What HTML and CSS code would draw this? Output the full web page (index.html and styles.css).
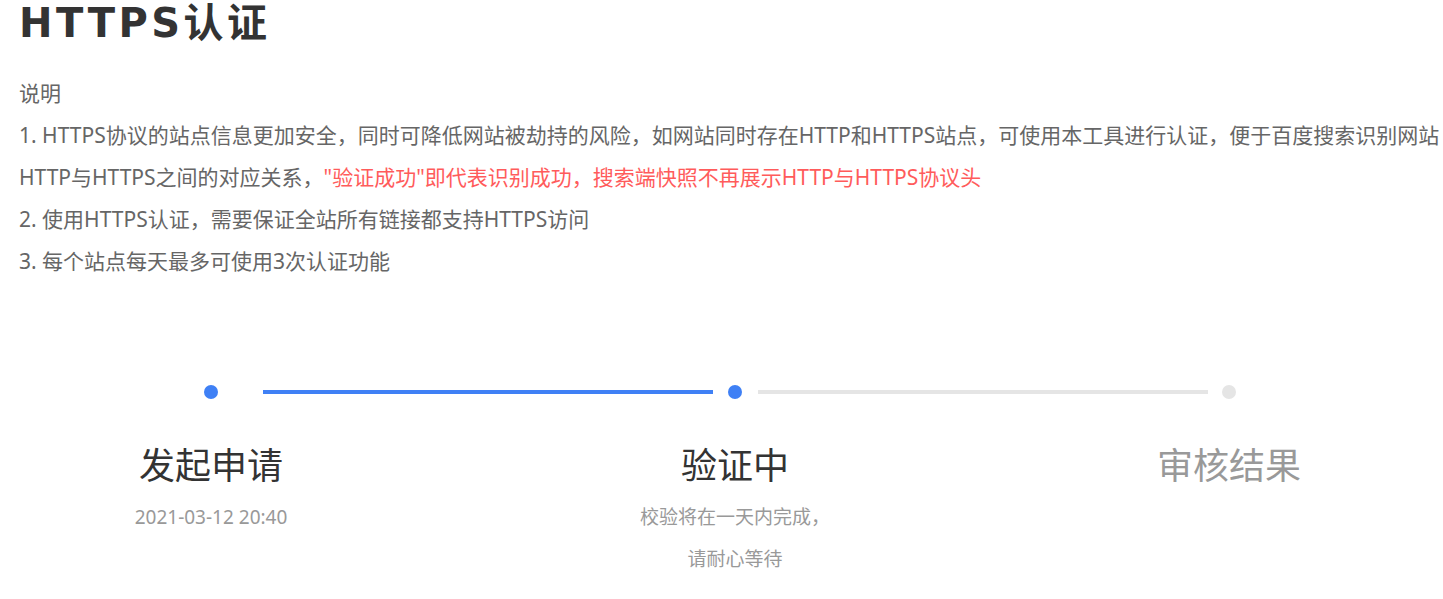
FILE: index.html
```html
<!DOCTYPE html>
<html lang="zh-CN">
<head>
  <meta charset="UTF-8" />
  <meta name="viewport" content="width=device-width, initial-scale=1.0" />
  <title>HTTPS认证</title>
  <link rel="stylesheet" href="styles.css">
</head>
<body>
  <h1 class="titulo">HTTPS认证</h1>

  <div class="nota">
    <p>说明</p>
    <p>1. HTTPS协议的站点信息更加安全，同时可降低网站被劫持的风险，如网站同时存在HTTP和HTTPS站点，可使用本工具进行认证，便于百度搜索识别网站HTTP与HTTPS之间的对应关系，<span class="rojo">"验证成功"即代表识别成功，搜索端快照不再展示HTTP与HTTPS协议头</span></p>
    <p>2. 使用HTTPS认证，需要保证全站所有链接都支持HTTPS访问</p>
    <p>3. 每个站点每天最多可使用3次认证功能</p>
  </div>

  <div class="pasos">
    <div class="pista">
      <span class="punto activo"></span>
      <span class="linea activa primera"></span>
      <span class="punto activo"></span>
      <span class="linea"></span>
      <span class="punto"></span>
    </div>

    <div class="etiquetas">
      <div class="paso">
        <h3>发起申请</h3>
        <p>2021-03-12 20:40</p>
      </div>
      <div class="paso">
        <h3>验证中</h3>
        <p>校验将在一天内完成，</p>
        <p>请耐心等待</p>
      </div>
      <div class="paso pendiente">
        <h3>审核结果</h3>
      </div>
    </div>
  </div>
</body>
</html>
```

FILE: styles.css
```css
body {
  font-family: "Noto Sans", "Noto Sans CJK SC", sans-serif;
  margin: 0;
  padding: 0 0 0 19px;
  background: #fff;
  color: #666;
}

.titulo {
  margin: 0;
  font-family: "DejaVu Sans", "Noto Sans CJK SC", sans-serif;
  font-size: 40px;
  line-height: 46px;
  letter-spacing: 3.5px;
  font-weight: bold;
  color: #333;
}

.nota {
  margin-top: 26px;
  font-size: 21px;
  line-height: 42px;
}

.nota p {
  margin: 0;
}

.rojo {
  color: #ff5b5b;
}

.pasos {
  margin-top: 103px;
}

.pista {
  display: flex;
  align-items: center;
  padding-left: 185px;
}

.punto {
  width: 14px;
  height: 14px;
  border-radius: 50%;
  background: #e5e5e5;
  flex-shrink: 0;
}

.punto.activo {
  background: #3f80f5;
}

.linea {
  width: 450px;
  height: 4px;
  background: #e5e5e5;
  margin: 0 14px 0 16px;
}

.linea.activa {
  background: #3f80f5;
}

.linea.primera {
  margin: 0 15px 0 45px;
}

.etiquetas {
  display: grid;
  grid-template-columns: 524px 494px 300px;
  justify-items: start;
  padding-left: 42px;
  margin-top: 42px;
}

.paso {
  width: 300px;
  text-align: center;
}

.paso h3 {
  margin: 0;
  font-size: 36px;
  line-height: 50px;
  font-weight: normal;
  color: #333;
}

.paso p {
  margin: 0;
  font-size: 19px;
  line-height: 42px;
  color: #999;
}

.paso h3 + p {
  margin-top: 5px;
}

.pendiente h3 {
  color: #999;
}
```
